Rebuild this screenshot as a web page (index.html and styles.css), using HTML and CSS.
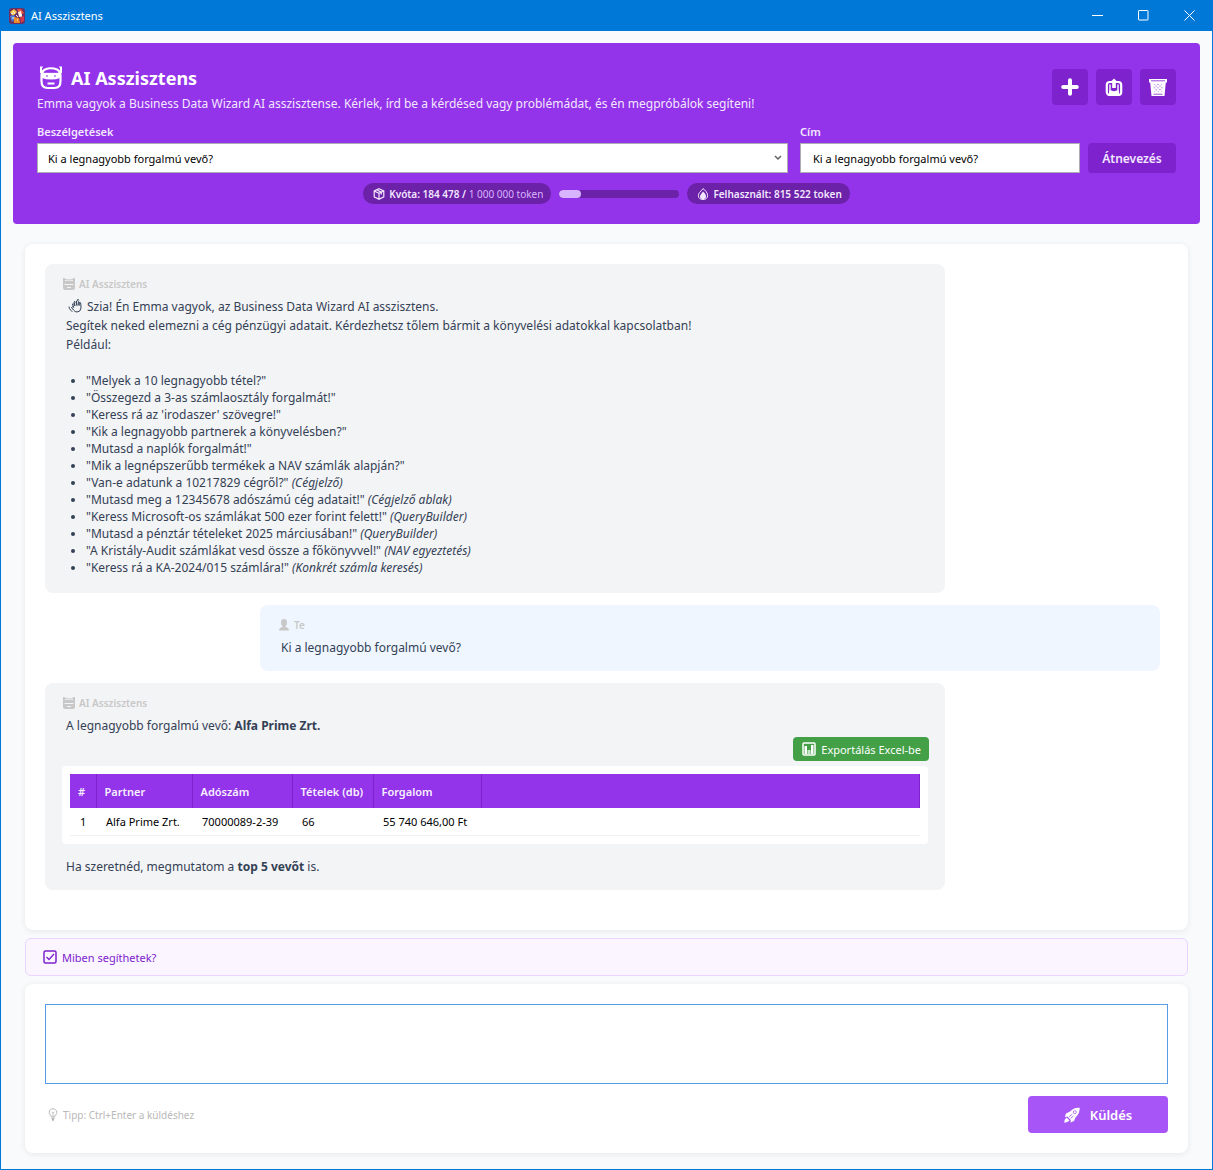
FILE: index.html
```html
<!DOCTYPE html>
<html lang="hu">
<head>
  <meta charset="UTF-8" />
  <meta name="viewport" content="width=device-width, initial-scale=1.0" />
  <title>AI Asszisztens</title>
  <link rel="stylesheet" href="styles.css">
</head>
<body>

  <!-- Ikonok -->
  <svg class="sprite" aria-hidden="true">
    <symbol id="robot" viewBox="0 0 24 24">
      <path d="M2 1v6M22 1v6" stroke="currentColor" stroke-width="2" fill="none"/>
      <path d="M1 1h3M20 1h3" stroke="currentColor" stroke-width="1"/>
      <path d="M2.500 9Q3 5 6 3.500q6-2.500 12 0Q21 5 21.500 9v6q0 7-6 7h-7q-6 0-6-7z" fill="none" stroke="currentColor" stroke-width="2.200"/>
      <path d="M3 6.500h18V12q-4 1.500-9 1.500T3 12z" fill="currentColor"/>
      <path d="M8.500 17.500h7" stroke="currentColor" stroke-width="2"/>
      <path d="M5 6.200h14M7 10h2M15 10h2" stroke="#9333ea" stroke-width="1"/>
    </symbol>
    <symbol id="robot-small" viewBox="0 0 12 12">
      <path d="M0 0h1.500l1 1h7l1-1H12v10q0 2-2 2H2q-2 0-2-2z" fill="currentColor"/>
      <path d="M2 2.500q4-1 8 0M1.500 6.500h9M4 9.500h4" stroke="#f3f4f6" fill="none"/>
    </symbol>
  </svg>

  <div class="window">
    <div class="titlebar">
      <svg class="app-icon" viewBox="0 0 16 16">
        <rect width="16" height="16" rx="3" fill="#6b2f63"/>
        <path d="M1 4l4-3 3 3-4 4z" fill="#f6c244"/>
        <path d="M8 1h4l3 4-4 2z" fill="#e9553a"/>
        <path d="M9 4l3-1 1 5-3 1z" fill="#fff1e2"/>
        <path d="M1 8l4-1 2 4-4 3z" fill="#4a7fd6"/>
        <path d="M5 9l5 1 1 5H5z" fill="#f08a24"/>
        <path d="M11 9l4-1v5l-3 2z" fill="#d43a4d"/>
        <path d="M4 3l2 3M7 7l2 2M3 10h2M12 6v3M2 6l2-1M8 12h1" stroke="#fff"/>
      </svg>
      <span class="titlebar-text">AI Asszisztens</span>
      <div class="window-buttons">
        <button aria-label="Kis méret"><svg viewBox="0 0 11 11"><path d="M0 5.500h11"/></svg></button>
        <button aria-label="Teljes méret"><svg viewBox="0 0 11 11"><rect x="0.500" y="0.500" width="9.500" height="9.500" rx="0.500"/></svg></button>
        <button aria-label="Bezárás"><svg viewBox="0 0 11 11"><path d="M.5.5l10 10M10.500.5l-10 10"/></svg></button>
      </div>
    </div>

    <header class="header">
      <div class="header-top">
        <div class="header-title">
          <h1><svg class="title-icon"><use href="#robot"/></svg>AI Asszisztens</h1>
          <p>Emma vagyok a Business Data Wizard AI asszisztense. Kérlek, írd be a kérdésed vagy problémádat, és én megpróbálok segíteni!</p>
        </div>
        <div class="header-actions">
          <button class="icon-btn" aria-label="Új beszélgetés">
            <svg viewBox="0 0 18 18"><path d="M9 2.200v13.600M2.200 9h13.600" stroke="#fff" stroke-width="4" stroke-linecap="round"/></svg>
          </button>
          <button class="icon-btn" aria-label="Exportálás">
            <svg viewBox="0 0 18 18">
              <rect x="1.800" y="4" width="14.400" height="13" rx="3" fill="none" stroke="#fff" stroke-width="2.200"/>
              <path d="M5 6.500v7.500h8V6.500" fill="none" stroke="#fff" stroke-width="1.400"/>
              <path d="M9 .5l4 4h-2.200v5.500H7.200V4.500H5z" fill="#fff"/>
              <path d="M4 12.500h3l1 1h2l1-1h3V16H4z" fill="#fff"/>
            </svg>
          </button>
          <button class="icon-btn" aria-label="Törlés">
            <svg viewBox="0 0 18 18">
              <path d="M0 1h18v3.500h-1.200L15.500 18h-13L1.200 4.500H0z" fill="#fff"/>
              <path d="M2 2.800h14M4.500 16.200h9" stroke="#7e22ce" stroke-width=".8"/>
              <path d="M5 6l8 8M9 6l4.500 4.500M4.800 9.500l4 4M13 6l-8 8M9 6L4.500 10.500M13.500 9.500l-4 4" stroke="#b07ae0" stroke-width=".8" stroke-dasharray="1.200 1.200"/>
            </svg>
          </button>
        </div>
      </div>

      <form class="header-form">
        <div class="field field-wide">
          <label for="conversations">Beszélgetések</label>
          <select id="conversations">
            <option>Ki a legnagyobb forgalmú vevő?</option>
          </select>
        </div>
        <div class="field">
          <label for="title">Cím</label>
          <input type="text" id="title" value="Ki a legnagyobb forgalmú vevő?" />
        </div>
        <button type="button" class="rename-btn">Átnevezés</button>
      </form>

      <div class="quota">
        <div class="pill">
          <svg viewBox="0 0 12 12" fill="none" stroke="currentColor" stroke-width="1.200"><path d="M6 .7l4.800 2.200v6L6 11.300 1.200 8.900v-6zM1.200 3L6 5.300 10.800 3M6 5.300v6M3.500 1.800l4.800 2.300v2.500"/></svg>
          <span><b>Kvóta: 184 478 /</b> <span class="limit">1 000 000 token</span></span>
        </div>
        <div class="bar"><div class="bar-fill" style="width: 18.4%"></div></div>
        <div class="pill">
          <svg viewBox="0 0 12 12"><path d="M6 .6C8 2 10.600 4.500 10.600 7.500S8.500 11.500 6 11.500 1.400 10.500 1.400 7.500C1.400 5 3.500 4 6 .6z" fill="none" stroke="currentColor"/><path d="M6 3.500c2 2 3 3 3 5S7.500 11 6 11 3 10.500 3 8.500s2-3 3-5z" fill="currentColor"/></svg>
          <b>Felhasznált: 815 522 token</b>
        </div>
      </div>
    </header>

    <main class="content">
      <section class="chat">
        <article class="message">
          <h2 class="author"><svg><use href="#robot-small"/></svg>AI Asszisztens</h2>
          <div class="text">
            <p><svg class="wave" viewBox="0 0 16 14" fill="none" stroke="currentColor" stroke-linecap="round"><path d="M5.500 8L4.500 5q1-1 2 1l.5 1-1-4q1-1.300 2 .5l1 3-.5-4.500q1.300-1 2 .5l.5 4 .3-3q1.500-.5 1.500 1.500L13 9q-.5 4-4 4-2 0-3.500-2L3.500 8.500q.7-1.300 2-.5zM1 8q0 2 1.500 3M3 11.500l1 1M9.500.6q1-.3 1.500.4"/></svg>Szia! Én Emma vagyok, az Business Data Wizard AI asszisztens.<br>
            Segítek neked elemezni a cég pénzügyi adatait. Kérdezhetsz tőlem bármit a könyvelési adatokkal kapcsolatban!<br>
            Például:</p>
            <ul>
              <li>"Melyek a 10 legnagyobb tétel?"</li>
              <li>"Összegezd a 3-as számlaosztály forgalmát!"</li>
              <li>"Keress rá az 'irodaszer' szövegre!"</li>
              <li>"Kik a legnagyobb partnerek a könyvelésben?"</li>
              <li>"Mutasd a naplók forgalmát!"</li>
              <li>"Mik a legnépszerűbb termékek a NAV számlák alapján?"</li>
              <li>"Van-e adatunk a 10217829 cégről?" <em>(Cégjelző)</em></li>
              <li>"Mutasd meg a 12345678 adószámú cég adatait!" <em>(Cégjelző ablak)</em></li>
              <li>"Keress Microsoft-os számlákat 500 ezer forint felett!" <em>(QueryBuilder)</em></li>
              <li>"Mutasd a pénztár tételeket 2025 márciusában!" <em>(QueryBuilder)</em></li>
              <li>"A Kristály-Audit számlákat vesd össze a főkönyvvel!" <em>(NAV egyeztetés)</em></li>
              <li>"Keress rá a KA-2024/015 számlára!" <em>(Konkrét számla keresés)</em></li>
            </ul>
          </div>
        </article>

        <article class="message message-user">
          <h2 class="author"><svg viewBox="0 0 12 12"><path d="M3 3q0-3 3-3t3 3q0 3-1.500 4v1q3.500.5 3.500 3.500H1Q1 8.500 4.500 8V7Q3 6 3 3z" fill="currentColor"/></svg>Te</h2>
          <div class="text"><p>Ki a legnagyobb forgalmú vevő?</p></div>
        </article>

        <article class="message">
          <h2 class="author"><svg><use href="#robot-small"/></svg>AI Asszisztens</h2>
          <div class="text"><p>A legnagyobb forgalmú vevő: <strong>Alfa Prime Zrt.</strong></p></div>
          <button class="export-btn">
            <svg viewBox="0 0 14 14"><rect x="1" y="1" width="12" height="12" rx="1" fill="none" stroke="#fff" stroke-width="1.500"/><path d="M2.500 4H5v8H2.500zM9 3h2.500v9H9z" fill="#fff"/><path d="M5.500 8h3v4h-3z" fill="#fff" opacity=".7"/></svg>Exportálás Excel-be
          </button>
          <div class="table-box">
            <table>
              <colgroup>
                <col class="col-num"><col class="col-partner"><col class="col-tax"><col class="col-count"><col class="col-sum"><col>
              </colgroup>
              <thead>
                <tr><th>#</th><th>Partner</th><th>Adószám</th><th>Tételek (db)</th><th>Forgalom</th><th></th></tr>
              </thead>
              <tbody>
                <tr><td>1</td><td>Alfa Prime Zrt.</td><td>70000089-2-39</td><td>66</td><td>55 740 646,00 Ft</td><td></td></tr>
              </tbody>
            </table>
          </div>
          <div class="text"><p>Ha szeretnéd, megmutatom a <strong>top 5 vevőt</strong> is.</p></div>
        </article>
      </section>

      <section class="hint">
        <svg viewBox="0 0 14 14" fill="none" stroke="currentColor"><rect x="1" y="1" width="12" height="12" rx="1.500" stroke-width="1.500"/><path d="M3.500 7L6 9.500l5-5.500" stroke-width="1.300"/></svg>
        Miben segíthetek?
      </section>

      <form class="composer">
        <textarea aria-label="Üzenet"></textarea>
        <div class="composer-footer">
          <p class="tip">
            <svg viewBox="0 0 10 13" fill="none" stroke="currentColor"><path d="M3.500 9C3.500 7.500 1.200 6.500 1.200 4.300S3 .8 5 .8s3.800 1.300 3.800 3.500S6.500 7.500 6.500 9z"/><path d="M3.500 4l1.500 1 1.500-1M5 5v4" stroke-width=".8"/><path d="M3.500 10.500h3M4 12h2" stroke-width="1.300"/></svg>
            Tipp: Ctrl+Enter a küldéshez
          </p>
          <button type="button" class="send-btn">
            <svg viewBox="0 0 16 16"><path d="M15.700.8Q10 0 6 4.500L2 6.500.8 10l2.500-.5 3.500 3.500-.3 2.500 3.500-1.500 1.500-3.500Q16 6.500 15.700.8z" fill="#fff"/><path d="M2.500 10.500Q.5 12 .3 15.700 4 15.500 5.500 13.500z" fill="#fff"/><circle cx="10.800" cy="5.200" r="1.500" fill="none" stroke="#a855f7" stroke-width=".8"/><path d="M4.800 10l3.500-3M6.500 11.500l3-2.500" stroke="#a855f7" stroke-width=".8"/></svg>
            Küldés
          </button>
        </div>
      </form>
    </main>
  </div>

</body>
</html>
```

FILE: styles.css
```css
* {
  margin: 0;
  padding: 0;
  box-sizing: border-box;
}

body, button, input, select, textarea {
  font-family: 'Noto Sans', 'Open Sans', sans-serif;
  font-size: 12px;
}

button {
  border: none;
  cursor: pointer;
}

svg {
  flex-shrink: 0;
}

.sprite {
  display: none;
}

.window {
  display: flex;
  flex-direction: column;
  min-height: 100vh;
  background: #f8fafc;
  border: 1px solid #0078d7;
  border-top: none;
}

/* Címsor */
.titlebar {
  display: flex;
  align-items: center;
  height: 31px;
  padding-left: 8px;
  background: #0078d7;
  color: #fff;
}

.app-icon {
  width: 16px;
  height: 16px;
  margin-right: 6px;
}

.titlebar-text {
  font-size: 11px;
}

.window-buttons {
  display: flex;
  margin-left: auto;
}

.window-buttons button {
  display: flex;
  align-items: center;
  justify-content: center;
  width: 46px;
  height: 31px;
  background: transparent;
}

.window-buttons svg {
  width: 11px;
  height: 11px;
  fill: none;
  stroke: #fff;
}

/* Fejléc */
.header {
  margin: 12px 12px 0;
  padding: 23px 24px 20px;
  background: #9333ea;
  border-radius: 4px;
  color: #f3e8ff;
}

.header-top {
  display: flex;
  justify-content: space-between;
}

.header h1 {
  display: flex;
  align-items: center;
  gap: 8px;
  height: 24px;
  padding-left: 2px;
  font-size: 18px;
  color: #fff;
}

.title-icon {
  width: 24px;
  height: 24px;
}

.header-title p {
  line-height: 18px;
  margin-top: 5px;
}

.header-actions {
  display: flex;
  gap: 8px;
  padding-top: 3px;
}

.icon-btn {
  display: flex;
  align-items: center;
  justify-content: center;
  width: 36px;
  height: 36px;
  border-radius: 4px;
  background: #7e22ce;
}

.icon-btn svg {
  width: 18px;
  height: 18px;
}

.header-form {
  display: flex;
  align-items: flex-end;
  margin-top: 11px;
}

.field {
  width: 280px;
  margin-right: 8px;
}

.field-wide {
  flex: 1;
  margin-right: 12px;
}

.field label {
  display: block;
  line-height: 16px;
  margin-bottom: 3px;
  font-size: 11px;
  font-weight: 600;
}

.field input,
.field select {
  display: block;
  width: 100%;
  height: 30px;
  padding: 0 12px;
  border: 1px solid #abadb3;
  border-radius: 0;
  background: #fff;
  font-size: 11px;
  color: #000;
}

.field select {
  appearance: none;
  padding: 0 10px;
  background: #fff url("data:image/svg+xml,%3Csvg xmlns='http://www.w3.org/2000/svg' width='8' height='6'%3E%3Cpath d='M1 1l3 3 3-3' fill='none' stroke='%23606060' stroke-width='1.500'/%3E%3C/svg%3E") no-repeat right 5px center;
}

.rename-btn {
  width: 88px;
  height: 30px;
  border-radius: 4px;
  background: #7e22ce;
  color: #f3e8ff;
  font-weight: 600;
}

.quota {
  display: flex;
  align-items: center;
  justify-content: center;
  gap: 8px;
  margin-top: 10px;
}

.pill {
  display: flex;
  align-items: center;
  gap: 4px;
  height: 21px;
  padding: 0 8px 0 10px;
  border-radius: 11px;
  background: #6b21a8;
  font-size: 10px;
}

.pill b {
  font-weight: 600;
}

.pill svg {
  width: 12px;
  height: 12px;
}

.limit {
  color: #d8b4fe;
}

.bar {
  width: 120px;
  height: 8px;
  border-radius: 4px;
  background: #6b21a8;
  overflow: hidden;
}

.bar-fill {
  height: 100%;
  border-radius: 4px;
  background: #d8b4fe;
}

/* Beszélgetés */
.content {
  flex: 1;
  display: flex;
  flex-direction: column;
  gap: 8px;
  padding: 20px 24px 16px;
}

.chat,
.composer {
  background: #fff;
  border-radius: 8px;
  box-shadow: 0 1px 6px rgba(0, 0, 0, 0.08);
}

.chat {
  flex: 1;
  display: flex;
  flex-direction: column;
  gap: 12px;
  padding: 20px 28px 20px 20px;
}

.message {
  display: flex;
  flex-direction: column;
  width: 900px;
  max-width: 100%;
  padding: 12px 16px;
  border-radius: 8px;
  background: #f3f4f6;
  color: #334155;
}

.message-user {
  align-self: flex-end;
  background: #eff6ff;
}

.author {
  display: flex;
  align-items: center;
  gap: 4px;
  height: 16px;
  padding-left: 2px;
  font-size: 10px;
  font-weight: 600;
  color: #c8c8c8;
}

.author svg {
  width: 12px;
  height: 12px;
}

.text {
  padding: 5px 5px 2px;
  line-height: 19px;
}

.wave {
  width: 16px;
  height: 14px;
  margin: 0 3px 0 2px;
  vertical-align: -2px;
}

.text ul {
  margin: 18px 0 3px;
  padding-left: 20px;
}

.text li {
  line-height: 17px;
}

.export-btn {
  display: flex;
  align-items: center;
  align-self: flex-end;
  gap: 5px;
  height: 24px;
  padding: 0 8px 0 9px;
  border-radius: 4px;
  background: #43a047;
  color: #fff;
  font-size: 11px;
}

.export-btn svg {
  width: 14px;
  height: 14px;
}

.table-box {
  margin: 5px 1px 8px;
  padding: 8px;
  border-radius: 4px;
  background: #fff;
}

table {
  width: 100%;
  table-layout: fixed;
  border-collapse: collapse;
  font-size: 11px;
  color: #000;
}

.col-num { width: 26px; }
.col-partner { width: 96px; }
.col-tax { width: 100px; }
.col-count { width: 81px; }
.col-sum { width: 108px; }

th {
  height: 34px;
  padding: 0 8px;
  border-right: 1px solid #7e22ce;
  background: #9333ea;
  color: #f8f0ff;
  font-weight: 600;
  text-align: left;
  white-space: nowrap;
}

td {
  height: 27px;
  padding: 0 10px;
  border-bottom: 1px solid #f0f0f0;
  white-space: nowrap;
}

/* Állapotsor */
.hint {
  display: flex;
  align-items: center;
  gap: 5px;
  height: 38px;
  padding-left: 17px;
  border: 1px solid #e9d5ff;
  border-radius: 6px;
  background: #faf5ff;
  color: #7e22ce;
  font-size: 11px;
}

.hint svg {
  width: 14px;
  height: 14px;
}

/* Üzenetküldés */
.composer {
  padding: 20px;
}

.composer textarea {
  display: block;
  width: 100%;
  height: 80px;
  padding: 8px;
  border: 1px solid #569de5;
  outline: none;
  resize: none;
}

.composer-footer {
  display: flex;
  align-items: center;
  justify-content: space-between;
  margin-top: 12px;
}

.tip {
  display: flex;
  align-items: center;
  gap: 5px;
  padding-left: 3px;
  font-size: 10px;
  color: #b8b8b8;
}

.tip svg {
  width: 10px;
  height: 13px;
}

.send-btn {
  display: flex;
  align-items: center;
  justify-content: center;
  gap: 10px;
  width: 140px;
  height: 37px;
  border-radius: 4px;
  background: #a855f7;
  color: #fff;
  font-size: 13px;
  font-weight: 600;
}

.send-btn svg {
  width: 16px;
  height: 16px;
}
```
